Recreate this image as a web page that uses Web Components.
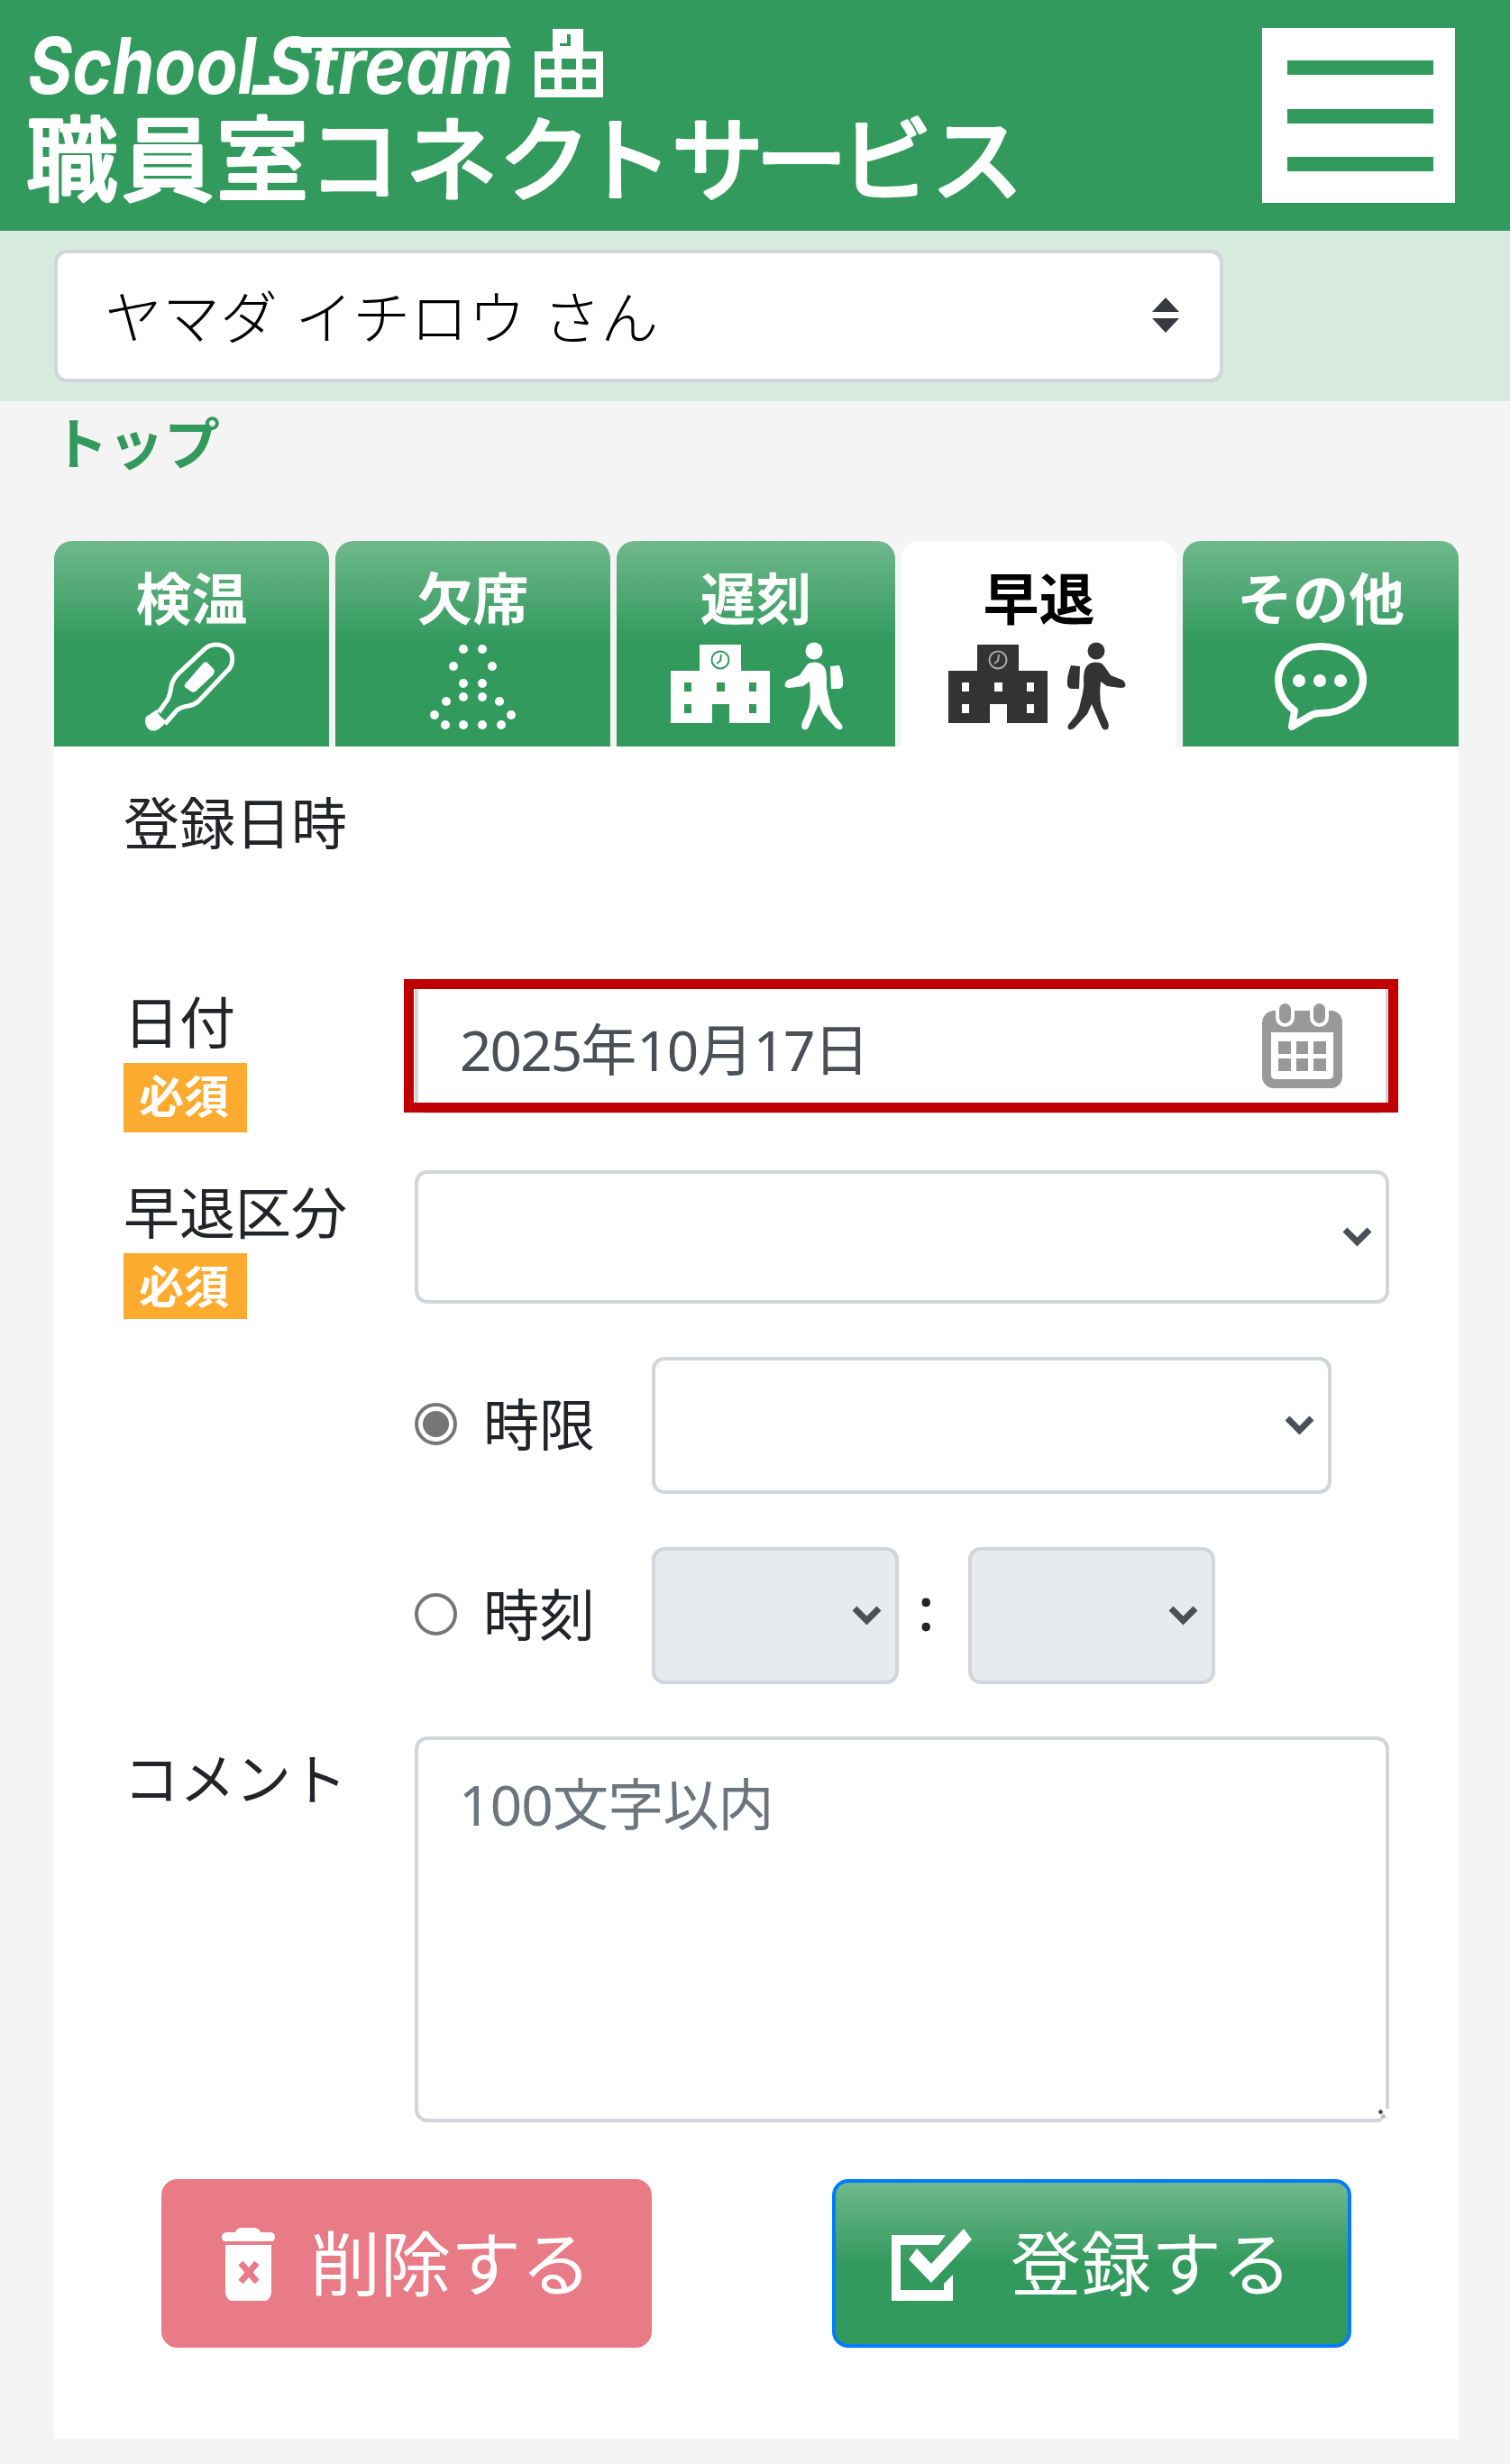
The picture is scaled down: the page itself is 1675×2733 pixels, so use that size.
<!DOCTYPE html>
<html lang="ja">
<head>
<meta charset="utf-8">
<title>職員室コネクトサービス</title>
<style>
  body {
    margin: 0;
    background: #f4f4f4;
    color: #212529;
    font-family: "Noto Sans CJK JP", sans-serif;
    font-size: 62px;
    line-height: 93px;
  }
  main {
    margin: 0 57px 0 60px;
  }
  .tabs {
    display: grid;
    grid-template-columns: 305px 305px 309px 305px 306px;
    gap: 7px;
    height: 228px;
  }
  .card {
    box-sizing: border-box;
    height: 1877px;
    padding: 36px 77px 0;
    background: #fff;
  }
  .buttons {
    display: flex;
    gap: 200px;
    margin: 63px 0 0 42px;
  }
</style>
</head>
<body>
<app-header></app-header>
<user-select>ヤマダ イチロウ さん</user-select>
<bread-crumb>トップ</bread-crumb>
<main>
  <div class="tabs">
    <tab-item icon="thermo">検温</tab-item>
    <tab-item icon="absent">欠席</tab-item>
    <tab-item icon="late">遅刻</tab-item>
    <tab-item icon="early" active>早退</tab-item>
    <tab-item icon="bubble">その他</tab-item>
  </div>
  <div class="card">
    <form-row style="height:221px"><span slot="label">登録日時</span></form-row>
    <form-row style="height:211px" required badge="77">
      <span slot="label">日付</span>
      <date-field style="margin-top:1px"></date-field>
    </form-row>
    <form-row style="height:209px" required badge="73">
      <span slot="label">早退区分</span>
      <select-box style="margin-top:2px;width:1081px;height:148px"></select-box>
    </form-row>
    <form-row style="height:211px">
      <radio-item checked>時限</radio-item>
      <select-box style="width:754px;height:152px"></select-box>
    </form-row>
    <form-row style="height:208px">
      <radio-item>時刻</radio-item>
      <select-box disabled style="width:274px;height:152px"></select-box>
      <time-colon>:</time-colon>
      <select-box disabled style="width:274px;height:152px"></select-box>
    </form-row>
    <form-row style="height:430px">
      <span slot="label">コメント</span>
      <comment-area>100文字以内</comment-area>
    </form-row>
    <div class="buttons">
      <action-button kind="delete">削除する</action-button>
      <action-button kind="submit">登録する</action-button>
    </div>
  </div>
</main>

<script>
// shared: attach a shadow root and fill it
class BaseElement extends HTMLElement {
  constructor() {
    super();
    this.attachShadow({ mode: "open" });
  }
  connectedCallback() {
    this.shadowRoot.innerHTML = this.render();
  }
}

class AppHeader extends BaseElement {
  render() {
    return `
      <style>
        :host { display: flex; justify-content: space-between; height: 256px; background: #339a5d; }
        .logo { display: block; }
        .brand { font: italic 700 86px/1 Inter, sans-serif; }
        .menu {
          display: flex; flex-direction: column; justify-content: space-between;
          box-sizing: border-box; width: 214px; height: 194px;
          margin: 31px 61px 0 0; padding: 36px 24px 35px 28px; background: #fff;
        }
        .menu i { height: 16px; background: #339a5d; }
      </style>
      <svg class="logo" width="1150" height="256" fill="#fff">
        <g class="brand">
          <text x="31" y="104" textLength="253" lengthAdjust="spacingAndGlyphs">School</text>
          <text x="296" y="104" textLength="273" lengthAdjust="spacingAndGlyphs">Stream</text>
        </g>
        <path d="M326 41H561L567 53H322zM281 94H318V105H279z"/>
        <path fill-rule="evenodd" d="M613 32H647V57H669V108H593V57H613zM600 65V77H615V65zM623 65V77H639V65zM646 65V77H661V65zM600 86V99H615V86zM623 86V99H639V86zM646 86V99H661V86zM629 38V48H621V51H633V38z"/>
        <text y="215" font-size="102" font-weight="400" stroke="#fff" stroke-width="4" stroke-linejoin="round"
          x="29 135 240 342 450 553 644 745 838 932 1033">職員室コネクトサービス</text>
      </svg>
      <div class="menu"><i></i><i></i><i></i></div>`;
  }
}

class UserSelect extends BaseElement {
  render() {
    return `
      <style>
        :host { display: block; box-sizing: border-box; height: 189px; padding: 21px 60px 0; background: #d6eade; }
        .box {
          display: flex; align-items: center; justify-content: space-between;
          box-sizing: border-box; width: 1297px; height: 147px; padding: 0 45px 0 52px;
          border: 4px solid #d0d6dc; border-radius: 14px; background: #fff;
          color: #000; font-weight: 300; font-size: 64px; word-spacing: 5px;
        }
        span { margin-top: -5px; }
        svg { margin-top: -3px; }
      </style>
      <div class="box">
        <span><slot></slot></span>
        <svg width="30" height="39" fill="#343a40"><path d="M15 0L30 16H0zM15 39L30 23H0z"/></svg>
      </div>`;
  }
}

class BreadCrumb extends BaseElement {
  render() {
    return `
      <style>
        :host { display: flow-root; box-sizing: border-box; height: 155px; padding: 0 58px; color: #339a5d; font-weight: 700; }
        div { margin-top: -2px; }
      </style>
      <div><slot></slot></div>`;
  }
}

const school = (hole) => `
  <path fill-rule="evenodd" d="M0 32H32V3H78V32H110V90H65V69H46V90H0zM15 45V55H23V45zM51 45V55H60V45zM87 45V55H95V45zM15 69V79H23V69zM87 69V79H95V69z"/>
  <circle cx="55" cy="20" r="9.5" fill="none" stroke="${hole}" stroke-width="2"/>
  <path d="M56 14L55 21L51 24" fill="none" stroke="${hole}" stroke-width="2"/>`;
const walker = `
  <ellipse cx="33" cy="10" rx="9.5" ry="9.5"/>
  <path d="M51 27L61 26Q66 39 65 48Q64 52 60 52L52 52Z"/>
  <path d="M30 23Q40 21 45 29Q47 34 47 42Q46 52 50 65Q52 77 56 82L64 92Q66 98 60 97Q57 96 54 92L43 80L38 69L28 92Q26 99 21 97Q18 95 20 89L27 73Q30 62 28 44L21 49L6 51Q-1 51 1 46Q2 42 7 41L17 37L24 27Q27 23 30 23Z"/>`;

const icons = {
  thermo: `<svg width="99" height="99" viewBox="0 0 99 99" fill="#fff" style="margin-left:-4px">
    <path d="M15 78L25 64Q28 58 29 49Q31 41 36 36L67 7Q72 3 79 3Q89 3 95 11Q99 20 94 29L59 66Q54 70 48 71Q40 72 35 76L22 91" fill="none" stroke="#fff" stroke-width="5"/>
    <path d="M13 75Q15 84 25 88L16 96Q10 101 4 97Q-2 91 1 83Z"/>
    <path d="M45 46L64 24Q66 21 69 23L76 30Q78 33 75 37L57 54Q54 57 51 55L44 50Q43 48 45 46Z"/></svg>`,
  absent: `<svg width="116" height="99" viewBox="0 0 116 99" fill="#fff">${
    [[47,8],[68,8],[36,27],[79,27],[47,46],[68,46],[47,61],[68,61],[28,66],[87,66],[15,81],[100,81],[27,92],[47,92],[68,92],[89,92]]
      .map(([x, y]) => `<circle cx="${x}" cy="${y}" r="5"/>`).join("")}</svg>`,
  late: `<svg width="192" height="99" viewBox="0 0 192 99" fill="#fff" style="margin-left:3px">${school("#339a5d")}<g transform="translate(126 0)">${walker}</g></svg>`,
  early: `<svg width="197" height="99" viewBox="0 0 197 99" fill="#333" style="margin-left:-4px">${school("#aaa")}<g transform="translate(197 0) scale(-1 1)">${walker}</g></svg>`,
  bubble: `<svg width="102" height="99" viewBox="0 0 102 99" fill="none" stroke="#fff" stroke-width="8">
    <path stroke-linejoin="round" d="M51 5C76 5 98 20 98 42C98 65 76 79 51 79Q45 79 41 81L19 94L22 76C11 68 4 57 4 42C4 20 26 5 51 5Z"/>
    <g fill="#fff" stroke="none"><circle cx="27" cy="43" r="7"/><circle cx="50" cy="43" r="7"/><circle cx="73" cy="43" r="7"/></g></svg>`
};

class TabItem extends BaseElement {
  render() {
    return `
      <style>
        :host {
          display: flex; flex-direction: column; align-items: center;
          box-sizing: border-box; padding-top: 15px; border-radius: 20px 20px 0 0;
          background: linear-gradient(#6fb88c 0, #339a5d 49%); color: #fff; font-weight: 700;
        }
        :host([active]) { background: #fff; color: #000; }
        svg { display: block; margin-top: 4px; }
      </style>
      <span><slot></slot></span>
      ${icons[this.getAttribute("icon")]}`;
  }
}

class FormRow extends BaseElement {
  render() {
    const badge = this.hasAttribute("required")
      ? `<div class="badge" style="height:${this.getAttribute("badge")}px">必須</div>`
      : "";
    return `
      <style>
        :host { display: grid; grid-template-columns: 323px 1fr; }
        .badge {
          box-sizing: border-box; width: 137px; margin-top: 1px; padding: 0 0 0 17px; background: #fcab2f;
          color: #fff; font-size: 50px; font-weight: 700; line-height: 69px;
        }
        .field { display: flex; align-items: flex-start; }
      </style>
      <div><slot name="label"></slot>${badge}</div>
      <div class="field"><slot></slot></div>`;
  }
}

class DateField extends BaseElement {
  render() {
    return `
      <style>
        :host {
          position: relative; display: flex; align-items: center; justify-content: space-between;
          box-sizing: border-box; width: 1081px; height: 149px; padding: 0 47px 0 46px;
          border: 4px solid #d0d6dc; border-radius: 14px; background: #fff;
          color: #495057; font-family: "Noto Sans", "Noto Sans CJK JP", sans-serif;
        }
        .value { margin-top: 8px; }
        .num { letter-spacing: -1.9px; }
        /* highlight frame over the input */
        .frame { position: absolute; inset: -4px -14px -3px -16px; border: 11px solid #c00000; }
      </style>
      <span class="value"><span class="num">2025</span>年<span class="num">10</span>月<span class="num">17</span>日</span>
      <svg width="90" height="95" viewBox="0 0 90 95" style="margin-top:-1px">
        <path fill="#999" fill-rule="evenodd" d="M12 8H78Q89 10 89 22V82Q88 92 78 94H11Q2 92 0 83V21Q1 10 12 8ZM10 32V80Q11 84 15 84H75Q79 83 79 79V32Z"/>
        <g fill="#999" stroke="#fff" stroke-width="4"><rect x="17" y="-2" width="17" height="26" rx="8.500"/><rect x="55" y="-2" width="17" height="26" rx="8.500"/></g>
        <path fill="#999" d="M18 42H32V56H18zM38 42H51V56H38zM57 42H71V56H57zM18 61H32V75H18zM38 61H51V75H38zM57 61H71V75H57z"/>
      </svg>
      <div class="frame"></div>`;
  }
}

class SelectBox extends BaseElement {
  render() {
    return `
      <style>
        :host {
          display: flex; align-items: center; justify-content: flex-end;
          box-sizing: border-box; padding-right: 15px;
          border: 4px solid #d0d6dc; border-radius: 14px; background: #fff;
        }
        :host([disabled]) { background: #e7ebee; }
      </style>
      <svg width="33" height="22"><path d="M3 3L16.500 16.500L30 3" fill="none" stroke="#495057" stroke-width="7"/></svg>`;
  }
}

class RadioItem extends BaseElement {
  render() {
    return `
      <style>
        :host { display: flex; align-items: center; width: 263px; height: 149px; }
        i {
          box-sizing: border-box; width: 47px; height: 47px; margin: 0 29px 0 0;
          border: 4px solid #767676; border-radius: 50%; background: #fff;
        }
        :host([checked]) i { background: radial-gradient(#767676 0 14px, #fff 15px); }
        span { margin-top: -5px; }
      </style>
      <i></i><span><slot></slot></span>`;
  }
}

class TimeColon extends BaseElement {
  render() {
    return `
      <style>
        :host { display: block; width: 56px; padding: 20px 0 0 21px; font-family: "Noto Sans", sans-serif; font-weight: 500; font-size: 68px; }
      </style>
      <slot></slot>`;
  }
}

class CommentArea extends BaseElement {
  render() {
    return `
      <style>
        :host {
          position: relative; display: block; box-sizing: border-box;
          width: 1081px; height: 428px; margin-top: 2px; padding: 25px 45px;
          border: 4px solid #d0d6dc; border-radius: 14px; background: #fff; color: #6c757d;
          font-family: "Noto Sans", "Noto Sans CJK JP", sans-serif; letter-spacing: -.8px;
        }
        svg { position: absolute; right: -4px; bottom: -4px; }
      </style>
      <slot></slot>
      <svg width="14" height="18"><path d="M9 3H14V18H4L9 12Z" fill="#fff"/><path d="M3 5L6 8" stroke="#444" stroke-width="4"/><path d="M6 10L9 13" stroke="#bbb" stroke-width="4"/></svg>`;
  }
}

const buttonIcons = {
  delete: `<svg width="59" height="81" viewBox="0 0 59 81" style="margin-top:2px">
    <path fill="#fff" d="M5 5H15Q17 0 22 0H37Q42 1 43 5H55Q59 6 59 10Q59 15 55 15H4Q0 15 0 10Q0 6 5 5ZM4 19H55V72Q54 79 49 81H10Q5 79 4 72Z"/>
    <path d="M21 39L39 60M39 39L21 60" stroke="#e87b85" stroke-width="7"/></svg>`,
  submit: `<svg width="90" height="81" viewBox="0 0 90 81" fill="#fff" style="margin-top:2px">
    <path d="M0 8H60L52 19H10V69H58V62L68 52V81H0Z"/>
    <path d="M19 35L28 23L44 40L80 1L89 13L44 61Z"/></svg>`
};

class ActionButton extends BaseElement {
  render() {
    return `
      <style>
        :host {
          display: flex; align-items: center; box-sizing: border-box; height: 187px;
          border-radius: 18px; color: #fff; font-size: 78px; line-height: 117px; white-space: nowrap;
        }
        :host([kind="delete"]) { width: 544px; padding-left: 67px; gap: 39px; background: #e87b85; }
        :host([kind="submit"]) {
          width: 576px; padding-left: 62px; gap: 42px; border: 4px solid #007bff;
          background: linear-gradient(#6fb88c 0, #339a5d 50%);
        }
        span { margin-top: -7px; }
      </style>
      ${buttonIcons[this.getAttribute("kind")]}
      <span><slot></slot></span>`;
  }
}

customElements.define("app-header", AppHeader);
customElements.define("user-select", UserSelect);
customElements.define("bread-crumb", BreadCrumb);
customElements.define("tab-item", TabItem);
customElements.define("form-row", FormRow);
customElements.define("date-field", DateField);
customElements.define("select-box", SelectBox);
customElements.define("radio-item", RadioItem);
customElements.define("time-colon", TimeColon);
customElements.define("comment-area", CommentArea);
customElements.define("action-button", ActionButton);
</script>
</body>
</html>
